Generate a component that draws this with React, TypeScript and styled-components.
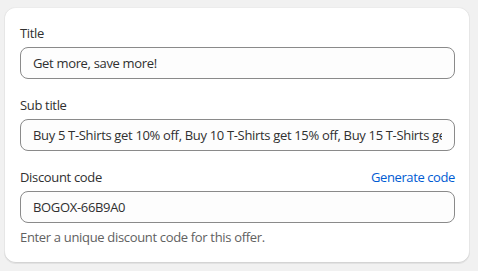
import React from "react";
import styled, { createGlobalStyle } from "styled-components";

const Global = createGlobalStyle`
  html, body { margin: 0; padding: 0; background: #f1f1f1; }
  body { font-family: "Open Sans", "Noto Sans", sans-serif; font-size: 13px; color: #303030; letter-spacing: -0.33px; }
  * { box-sizing: border-box; }
`;

const Page = styled.div`
  width: 478px;
  height: 271px;
  padding: 7px 8px 0 4px;
  background: #f1f1f1;
`;

const Card = styled.div`
  background: #ffffff;
  border-radius: 12px;
  padding: 16px 15px 16px 16px;
  display: flex;
  flex-direction: column;
  gap: 16px;
  box-shadow: 0 1px 0 0 rgba(26, 26, 26, 0.07), inset 0 -1px 0 0 #d4d4d4, inset 1px 0 0 0 #e6e6e6, inset -1px 0 0 0 #e6e6e6, inset 0 1px 0 0 #ececec;
`;

const Field = styled.div`
  display: flex;
  flex-direction: column;
  gap: 4px;
`;

const LabelRow = styled.div`
  display: flex;
  justify-content: space-between;
  align-items: center;
  height: 20px;
`;

const Label = styled.label`
  font-size: 13px;
  line-height: 20px;
  color: #303030;
`;

const Link = styled.a`
  font-size: 13px;
  line-height: 20px;
  color: #005bd3;
  text-decoration: none;
  letter-spacing: -0.4px;
  cursor: pointer;
`;

const Input = styled.input`
  height: 32px;
  width: 100%;
  border: 1px solid #8a8a8a;
  border-radius: 8px;
  background: #fdfdfd;
  padding: 0 12px;
  font: inherit;
  font-size: 13px;
  letter-spacing: -0.33px;
  color: #303030;
  outline: none;
`;

const Help = styled.div`
  font-size: 13px;
  line-height: 20px;
  color: #616161;
`;

export default function App() {
  return (
    <Page>
      <Global />
      <Card>
        <Field>
          <LabelRow>
            <Label>Title</Label>
          </LabelRow>
          <Input defaultValue="Get more, save more!" readOnly />
        </Field>
        <Field>
          <LabelRow>
            <Label>Sub title</Label>
          </LabelRow>
          <Input
            defaultValue="Buy 5 T-Shirts get 10% off, Buy 10 T-Shirts get 15% off, Buy 15 T-Shirts get 20% off"
            readOnly
          />
        </Field>
        <Field>
          <LabelRow>
            <Label>Discount code</Label>
            <Link>Generate code</Link>
          </LabelRow>
          <Input defaultValue="BOGOX-66B9A0" readOnly />
          <Help>Enter a unique discount code for this offer.</Help>
        </Field>
      </Card>
    </Page>
  );
}
